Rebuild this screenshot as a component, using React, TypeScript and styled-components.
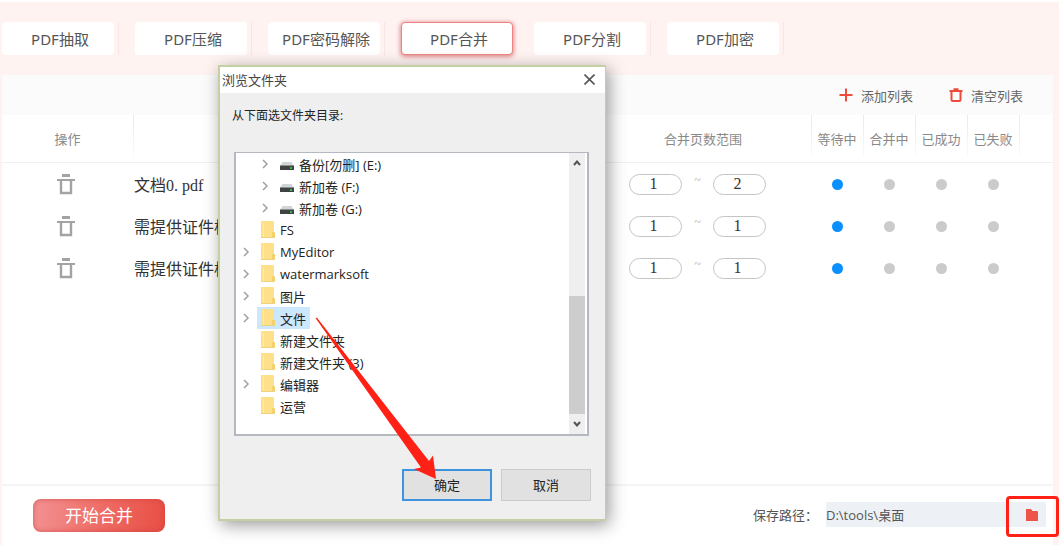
import React from "react";
import styled, { createGlobalStyle, css } from "styled-components";

const ui = `"Open Sans", "Noto Sans CJK SC", sans-serif`;
const serif = `"Liberation Serif", "Noto Sans CJK SC", serif`;

const GlobalStyle = createGlobalStyle`
  *, *::before, *::after { box-sizing: border-box; }
  body { margin: 0; background: #fff3f2; font-family: ${ui}; font-size: 13px; color: #555; }
  button, input { font: inherit; color: inherit; margin: 0; padding: 0; border: 0; background: none; }
`;

const Page = styled.div`
  position: relative;
  display: flex;
  flex-direction: column;
  min-height: 100vh;
  border-top: 2px solid #fff;
  overflow: hidden;
`;

const Nav = styled.nav`
  display: flex;
  padding: 20px 2px;
  font-family: "Noto Sans", "Noto Sans CJK SC", sans-serif;
`;

const TabSlot = styled.div<{ $line: boolean }>`
  width: 117px;
  margin-right: 16px;
  border-right: 1px solid ${(p) => (p.$line ? "#f6e6e6" : "transparent")};
`;

const Tab = styled.button<{ $active: boolean }>`
  display: block;
  width: 112px;
  height: 33px;
  border-radius: 4px;
  background: #fff;
  color: #555;
  font-size: 15px;
  padding-left: 4px;
  white-space: nowrap;
  ${(p) =>
    p.$active &&
    css`
      border: 1px solid #ee8382;
      box-shadow: 0 1px 4px 1px rgba(205, 75, 75, 0.6);
    `}
`;

const Panel = styled.main`
  flex: 1;
  display: flex;
  flex-direction: column;
  margin: 0 6px 0 2px;
  background: #fff;
`;

const Toolbar = styled.div`
  display: flex;
  justify-content: flex-end;
  align-items: center;
  gap: 36px;
  height: 40px;
  padding-right: 30px;
  background: #fbfbfb;
`;

const ToolButton = styled.button`
  display: flex;
  align-items: center;
  gap: 8px;
  color: #666;
`;

const Table = styled.table`
  width: 100%;
  table-layout: fixed;
  border-spacing: 0;
`;

const Th = styled.th<{ $w?: number; $line?: boolean }>`
  width: ${(p) => (p.$w ? `${p.$w}px` : "auto")};
  height: 48px;
  padding: 0;
  border-bottom: 1px solid #f0f0f0;
  font-weight: 400;
  color: #8a8a8a;
  white-space: nowrap;
  ${(p) =>
    p.$line &&
    css`
      background: linear-gradient(#e9e9e9, #fafafa) left top / 1px 42px no-repeat;
    `}
`;

const Td = styled.td<{ $left?: boolean }>`
  height: 42px;
  padding: 0 0 0 1px;
  text-align: ${(p) => (p.$left ? "left" : "center")};
  font-family: ${serif};
  font-size: 16px;
  color: #333;
  white-space: nowrap;
  overflow: hidden;
`;

const DeleteButton = styled.button`
  display: block;
  width: 126px;
  height: 24px;
  svg { display: block; margin: 0 auto; }
`;

const Range = styled.div`
  display: flex;
  justify-content: center;
  gap: 10px;
  padding-right: 12px;
`;

const PageInput = styled.input`
  width: 53px;
  height: 21px;
  padding-right: 4px;
  border: 1px solid #c4c4c4;
  border-radius: 11px;
  background: #fff;
  text-align: center;
`;

const Tilde = styled.span`
  width: 11px;
  font-size: 12px;
  line-height: 12px;
  color: #aaa;
`;

const Dot = styled.span<{ $on: boolean }>`
  display: block;
  width: 11px;
  height: 11px;
  margin: 0 auto;
  border-radius: 50%;
  background: ${(p) => (p.$on ? "#0a8fff" : "#cbcbcb")};
`;

const Footer = styled.footer`
  display: flex;
  align-items: center;
  justify-content: space-between;
  height: 61px;
  margin-top: auto;
  padding: 0 7px 0 31px;
  border-top: 2px solid #f5f5f6;
`;

const StartButton = styled.button`
  width: 132px;
  height: 33px;
  padding-bottom: 2px;
  border-radius: 8px;
  background: linear-gradient(100deg, #f29393, #ee6a63 55%, #e84e43);
  box-shadow: inset 0 0 4px 1px rgba(205, 60, 60, 0.5);
  color: #fff;
  font-size: 17px;
`;

const PathRow = styled.div`
  display: flex;
  align-items: center;
  gap: 8px;
  padding-bottom: 2px;
`;

const PathField = styled.div`
  position: relative;
  display: flex;
  align-items: center;
  width: 220px;
  height: 25px;
  background: #edf1f5;
`;

const PathInput = styled.input`
  flex: 1;
  min-width: 0;
`;

const BrowseButton = styled.button`
  width: 28px;
  height: 25px;
  svg { display: block; margin: 0 auto; }
`;

const Highlight = styled.span`
  position: absolute;
  top: -6px;
  right: -13px;
  width: 53px;
  height: 41px;
  border: 3px solid #ff2115;
  border-radius: 4px;
  pointer-events: none;
`;

const Dialog = styled.section`
  position: absolute;
  left: 218px;
  top: 63px;
  display: flex;
  flex-direction: column;
  width: 388px;
  border: 2px solid #c3d1a2;
  border-right-width: 1px;
  background: #efefef;
  box-shadow: 3px 4px 16px rgba(0, 0, 0, 0.4);
  color: #222;
`;

const TitleBar = styled.header`
  display: flex;
  align-items: center;
  justify-content: space-between;
  height: 26px;
  padding: 0 10px 2px 2px;
  background: #fff;
`;

const Title = styled.h1`
  margin: 0;
  font-size: 13px;
  font-weight: 400;
  color: #444;
`;

const CloseButton = styled.button`
  svg { display: block; }
`;

const Message = styled.p`
  margin: 14px 12px 0;
  font-size: 12px;
  line-height: 18px;
`;

const TreeBox = styled.div`
  display: flex;
  height: 284px;
  margin: 27px 16px 0 14px;
  padding-right: 2px;
  border: 1px solid #b5b8be;
  border-left-width: 2px;
  border-right-width: 2px;
  border-bottom-width: 2px;
  background: #fff;
`;

const Tree = styled.ul`
  flex: 1;
  margin: 0;
  padding: 0 0 0 7px;
  list-style: none;
`;

const Item = styled.li<{ $deep: boolean }>`
  display: flex;
  align-items: center;
  height: 22px;
  padding-left: ${(p) => (p.$deep ? 19 : 0)}px;
`;

const Twisty = styled.span`
  width: 14px;
  svg { display: block; }
`;

const Label = styled.span<{ $selected: boolean }>`
  display: flex;
  align-items: center;
  gap: 5px;
  height: 22px;
  padding: 0 4px;
  white-space: nowrap;
  background: ${(p) => (p.$selected ? "#cce8ff" : "transparent")};
`;

const Scrollbar = styled.div`
  display: flex;
  flex-direction: column;
  width: 16px;
  background: #efefef;
`;

const ScrollArrow = styled.button`
  height: 20px;
  svg { display: block; margin: 0 auto; }
`;

const ScrollThumb = styled.div`
  height: 118px;
  margin-top: auto;
  background: #cdcdcd;
`;

const Actions = styled.div`
  display: flex;
  justify-content: flex-end;
  gap: 9px;
  padding: 33px 14px 18px;
`;

const DialogButton = styled.button<{ $primary?: boolean }>`
  width: 90px;
  height: 32px;
  padding-bottom: 2px;
  background: #e1e1e1;
  border: ${(p) => (p.$primary ? "2px solid #3f92dc" : "1px solid #cbcbcb")};
`;

const Arrow = styled.svg`
  position: absolute;
  left: 92px;
  top: 248px;
  pointer-events: none;
`;

const Trash = () => (
  <svg width="18" height="21" viewBox="0 0 18 21" fill="none" stroke="#a3a3a3">
    <path d="M5 1.5h8" strokeWidth="3" />
    <path d="M0 6h18" strokeWidth="2" />
    <path d="M4 6.5v12.5h10V6.500" strokeWidth="2.4" />
  </svg>
);

const RedTrash = () => (
  <svg width="14" height="14" viewBox="0 0 14 14" fill="none" stroke="#ee4b3c" strokeWidth="2">
    <path d="M.5 3h13M4.500 1.200h5M2.500 3v8.500a1.500 1.500 0 0 0 1.500 1.500h6a1.500 1.500 0 0 0 1.500-1.500V3" />
  </svg>
);

const Plus = () => (
  <svg width="14" height="14" viewBox="0 0 14 14" stroke="#ee4b3c" strokeWidth="2">
    <path d="M7 .5v13M.5 7h13" />
  </svg>
);

const Chevron = () => (
  <svg width="7" height="10" viewBox="0 0 7 10" fill="none" stroke="#a0a0a0" strokeWidth="1.5">
    <path d="M1 1l4 4-4 4" />
  </svg>
);

const Folder = () => (
  <svg width="14" height="18" viewBox="0 0 14 18">
    <path d="M1 0h11a1 1 0 0 1 1 1v16H1a1 1 0 0 1-1-1V1a1 1 0 0 1 1-1z" fill="#ffe08a" />
    <path d="M2 2h1v14H2z" fill="#ffeaa9" />
    <path d="M11 11h2a1 1 0 0 1 1 1V16a1 1 0 0 1-1 1h-2z" fill="#f3d26c" />
    <path d="M0 16.500h13" stroke="#f0d27c" />
  </svg>
);

const Drive = () => (
  <svg width="14" height="18" viewBox="0 0 14 18">
    <path d="M2.500 7h9L14 11H0z" fill="#d2d4d6" />
    <path d="M0 11h14v4H0z" fill="#3f4344" />
    <path d="M0 10.500h14" stroke="#8d9193" />
    <path d="M10 12h2v2h-2z" fill="#35b44a" />
  </svg>
);

const ScrollChevron = ({ up = false }: { up?: boolean }) => (
  <svg width="8" height="6" viewBox="0 0 8 6" fill="none" stroke="#555" strokeWidth="2">
    <path d={up ? "M1 5l3-3.500L7 5" : "M1 1l3 3.500L7 1"} />
  </svg>
);

const tabs = ["PDF抽取", "PDF压缩", "PDF密码解除", "PDF合并", "PDF分割", "PDF加密"];
const statuses = ["等待中", "合并中", "已成功", "已失败"];
const files = [
  { name: "文档0. pdf", from: 1, to: 2 },
  { name: "需提供证件标", from: 1, to: 1 },
  { name: "需提供证件标", from: 1, to: 1 },
];
const tree = [
  { name: "备份[勿删] (E:)", drive: true, open: true },
  { name: "新加卷 (F:)", drive: true, open: true },
  { name: "新加卷 (G:)", drive: true, open: true },
  { name: "FS", open: false },
  { name: "MyEditor", open: true },
  { name: "watermarksoft", open: true },
  { name: "图片", open: true },
  { name: "文件", open: true, selected: true },
  { name: "新建文件夹", open: false },
  { name: "新建文件夹 (3)", open: false },
  { name: "编辑器", open: true },
  { name: "运营", open: false },
];

const FolderDialog = () => (
  <Dialog role="dialog" aria-labelledby="dialog-title">
    <TitleBar>
      <Title id="dialog-title">浏览文件夹</Title>
      <CloseButton aria-label="关闭">
        <svg width="11" height="11" viewBox="0 0 11 11" stroke="#555" strokeWidth="1.6">
          <path d="M.5.5l10 10M10.500.5l-10 10" />
        </svg>
      </CloseButton>
    </TitleBar>
    <Message>从下面选文件夹目录:</Message>
    <TreeBox>
      <Tree>
        {tree.map((n) => (
          <Item key={n.name} $deep={!!n.drive}>
            <Twisty>{n.open && <Chevron />}</Twisty>
            <Label $selected={!!n.selected}>
              {n.drive ? <Drive /> : <Folder />}
              {n.name}
            </Label>
          </Item>
        ))}
      </Tree>
      <Scrollbar>
        <ScrollArrow aria-label="向上"><ScrollChevron up /></ScrollArrow>
        <ScrollThumb />
        <ScrollArrow aria-label="向下"><ScrollChevron /></ScrollArrow>
      </Scrollbar>
    </TreeBox>
    <Actions>
      <DialogButton $primary>确定</DialogButton>
      <DialogButton>取消</DialogButton>
    </Actions>
    <Arrow width="126" height="166" viewBox="0 0 126 166" fill="#ff2115">
      <path d="M3.500 3Q5 2 6 4L117 146 121 140.500 124 164 102 154 109 152.500z" />
    </Arrow>
  </Dialog>
);

export default function App() {
  return (
    <>
      <GlobalStyle />
      <Page>
        <Nav>
          {tabs.map((t) => (
            <TabSlot key={t} $line={t !== "PDF合并"}>
              <Tab $active={t === "PDF合并"}>{t}</Tab>
            </TabSlot>
          ))}
        </Nav>
        <Panel>
          <Toolbar>
            <ToolButton><Plus />添加列表</ToolButton>
            <ToolButton><RedTrash />清空列表</ToolButton>
          </Toolbar>
          <Table>
            <thead>
              <tr>
                <Th $w={131}>操作</Th>
                <Th $line />
                <Th $w={216}>合并页数范围</Th>
                {statuses.map((s) => (
                  <Th key={s} $w={52} $line>{s}</Th>
                ))}
                <Th $w={34} $line />
              </tr>
            </thead>
            <tbody>
              {files.map((f, i) => (
                <tr key={i}>
                  <Td><DeleteButton aria-label="删除"><Trash /></DeleteButton></Td>
                  <Td $left>{f.name}</Td>
                  <Td>
                    <Range>
                      <PageInput aria-label="起始页" defaultValue={f.from} />
                      <Tilde>~</Tilde>
                      <PageInput aria-label="结束页" defaultValue={f.to} />
                    </Range>
                  </Td>
                  {statuses.map((s, k) => (
                    <Td key={s}><Dot $on={k === 0} /></Td>
                  ))}
                  <Td />
                </tr>
              ))}
            </tbody>
          </Table>
          <Footer>
            <StartButton>开始合并</StartButton>
            <PathRow>
              <label htmlFor="save-path">保存路径：</label>
              <PathField>
                <PathInput id="save-path" defaultValue="D:\tools\桌面" />
                <BrowseButton aria-label="浏览">
                  <svg width="12" height="12" viewBox="0 0 12 12" fill="#ee5548">
                    <path d="M0 0h5l1.500 2H11a1 1 0 0 1 1 1v9H0z" />
                  </svg>
                </BrowseButton>
                <Highlight />
              </PathField>
            </PathRow>
          </Footer>
        </Panel>
        <FolderDialog />
      </Page>
    </>
  );
}
